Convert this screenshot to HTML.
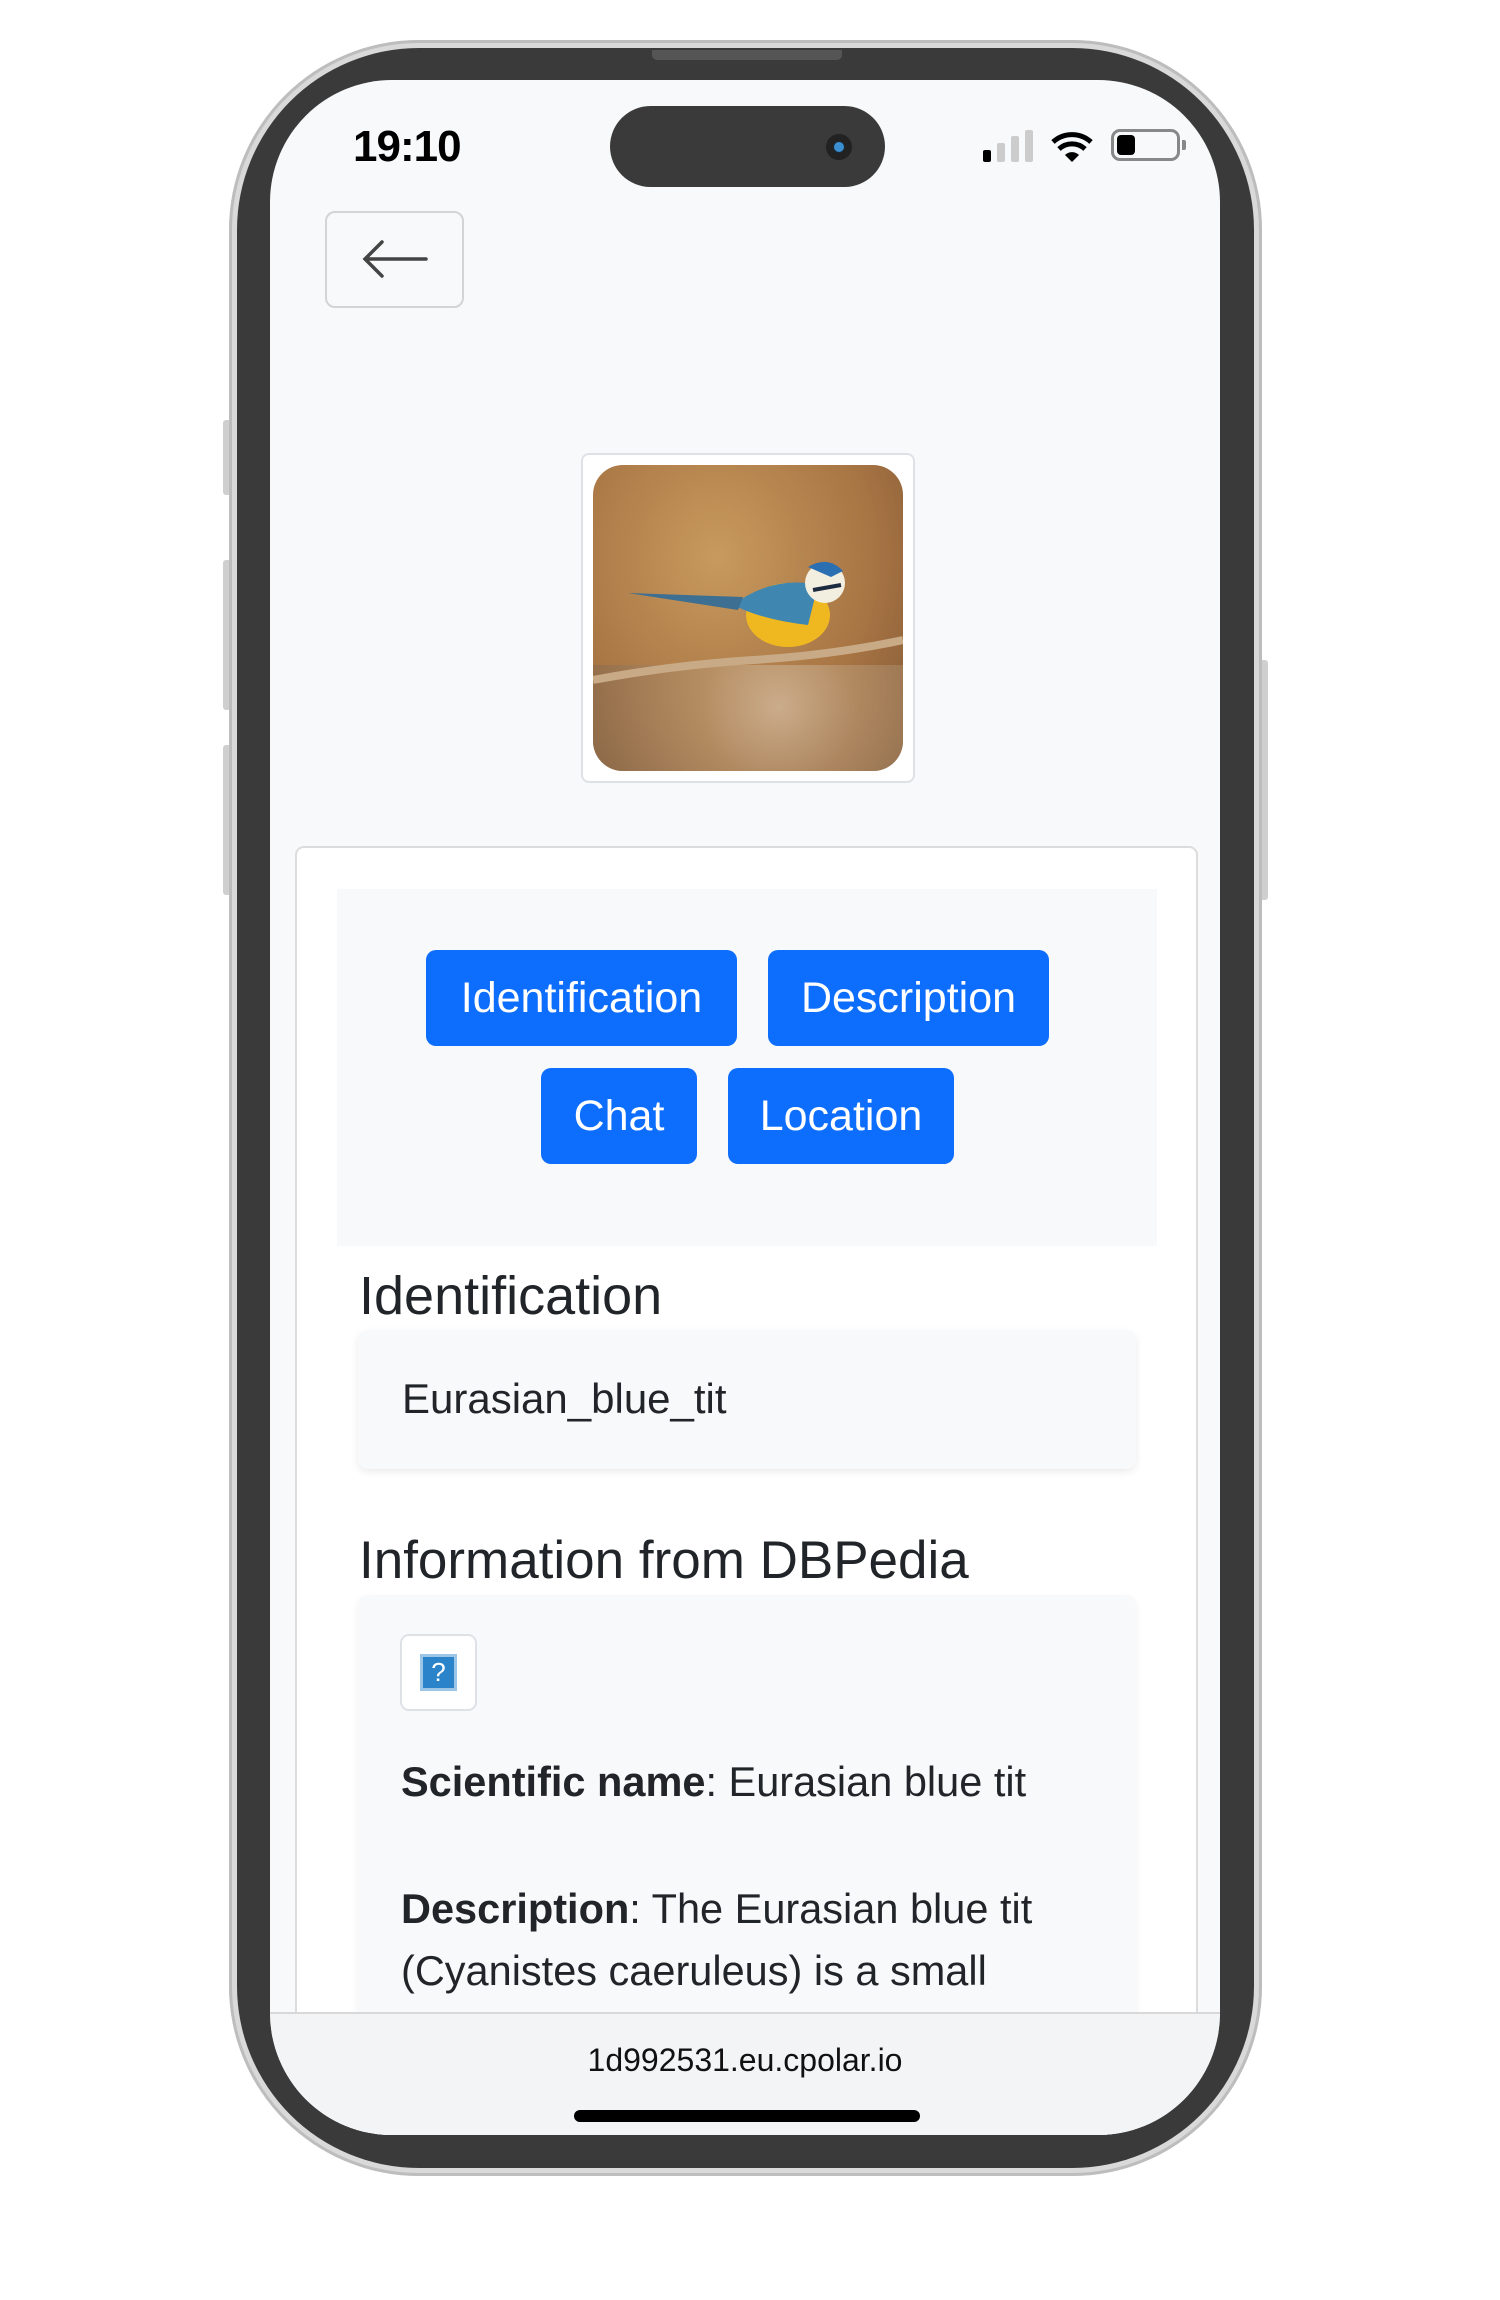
<!DOCTYPE html>
<html><head><meta charset="utf-8"><style>
*{box-sizing:border-box;margin:0;padding:0}
body{width:1500px;height:2300px;background:#fff;position:relative;overflow:hidden;font-family:"Liberation Sans",sans-serif;color:#212529}
.abs{position:absolute}
.frame{left:229px;top:40px;width:1033px;height:2136px;border-radius:190px;background:#d9d9d9;box-shadow:inset 0 0 0 3px #bdbdbd}
.bezel{left:237px;top:48px;width:1017px;height:2120px;border-radius:182px;background:#3a3a3a}
.screen{left:270px;top:80px;width:950px;height:2055px;border-radius:122px;background:#f8f9fa;overflow:hidden}
.btn{position:absolute;background:#0d6efd;color:#fff;border-radius:10px;font-size:43px;display:flex;align-items:center;justify-content:center}
</style></head><body>
<div class="abs" style="left:223px;top:420px;width:8px;height:75px;background:#cfcfcf;border-radius:3px"></div>
<div class="abs" style="left:223px;top:560px;width:8px;height:150px;background:#cfcfcf;border-radius:3px"></div>
<div class="abs" style="left:223px;top:745px;width:8px;height:150px;background:#cfcfcf;border-radius:3px"></div>
<div class="abs" style="left:1260px;top:660px;width:8px;height:240px;background:#cfcfcf;border-radius:3px"></div>
<div class="abs frame"></div>
<div class="abs bezel"></div>
<div class="abs" style="left:652px;top:50px;width:190px;height:10px;background:#555;border-radius:0 0 5px 5px"></div>
<div class="abs screen">
  <div class="abs" style="left:83px;top:42px;font-size:44px;font-weight:bold;color:#000;letter-spacing:-1px">19:10</div>
  <div class="abs" style="left:340px;top:26px;width:275px;height:81px;border-radius:41px;background:#3a3a3a"></div>
  <div class="abs" style="left:556px;top:54px;width:26px;height:26px;border-radius:50%;background:#1c2a36;box-shadow:inset 0 0 0 7px #222"></div>
  <div class="abs" style="left:564px;top:62px;width:10px;height:10px;border-radius:50%;background:#3a8fd0"></div>
  <div class="abs" style="left:713px;top:70px;width:8px;height:12px;background:#000;border-radius:2px"></div>
  <div class="abs" style="left:727px;top:63px;width:8px;height:19px;background:#ccc;border-radius:2px"></div>
  <div class="abs" style="left:741px;top:56px;width:8px;height:26px;background:#ccc;border-radius:2px"></div>
  <div class="abs" style="left:755px;top:50px;width:8px;height:32px;background:#ccc;border-radius:2px"></div>
  <svg class="abs" style="left:780px;top:51px" width="44" height="31" viewBox="0 0 44 31"><path d="M22 31 L15 24 A10 10 0 0 1 29 24 Z" fill="#000"/><path d="M9 18 A19 19 0 0 1 35 18" stroke="#000" stroke-width="5" fill="none"/><path d="M3 11 A28 28 0 0 1 41 11" stroke="#000" stroke-width="5" fill="none"/></svg>
  <div class="abs" style="left:841px;top:49px;width:69px;height:32px;border:3px solid #888;border-radius:9px"></div>
  <div class="abs" style="left:847px;top:55px;width:18px;height:20px;background:#000;border-radius:4px"></div>
  <div class="abs" style="left:912px;top:60px;width:4px;height:10px;background:#888;border-radius:0 2px 2px 0"></div>
  <div class="abs" style="left:55px;top:131px;width:139px;height:97px;border:2px solid #d4d4d4;border-radius:10px;background:#f8f9fa"></div>
  <svg class="abs" style="left:92px;top:158px" width="66" height="42" viewBox="0 0 66 42"><path d="M64 21 H4 M20 4 L3 21 L20 38" stroke="#444" stroke-width="3.5" fill="none" stroke-linecap="round"/></svg>
  <div class="abs" style="left:311px;top:373px;width:334px;height:330px;background:#fff;border:2px solid #dee2e6;border-radius:8px"></div>
  <div class="abs" style="left:323px;top:385px;width:310px;height:306px;border-radius:30px;overflow:hidden;background:radial-gradient(ellipse at 40% 30%,#c89a5e,#a77443 60%,#7d5636)">
    <div class="abs" style="left:0;top:200px;width:310px;height:106px;background:radial-gradient(circle at 60% 40%,#d8c2a8 0,#b8946d 40%,#8a6a4c 100%);opacity:.7"></div>
    <svg class="abs" style="left:0;top:0" width="310" height="306" viewBox="0 0 310 306"><path d="M0 215 Q80 200 160 195 T310 175" stroke="#c9aa86" stroke-width="8" fill="none"/><ellipse cx="195" cy="150" rx="42" ry="32" fill="#f0b820"/><path d="M140 140 Q180 110 225 120 L215 160 Q170 155 140 140Z" fill="#3f86b0"/><path d="M35 128 L150 132 L145 145Z" fill="#3c6f92"/><circle cx="232" cy="118" r="20" fill="#f3efe0"/><path d="M215 102 Q235 90 250 106 L238 112Z" fill="#2b6fb3"/><path d="M220 125 L248 120" stroke="#1c2a40" stroke-width="4"/></svg>
  </div>
  <div class="abs" style="left:25px;top:766px;width:903px;height:1400px;background:#fff;border:2px solid #dcdcdc;border-radius:9px"></div>
  <div class="abs" style="left:67px;top:809px;width:820px;height:357px;background:#f8f9fa"></div>
  <div class="btn" style="left:156px;top:870px;width:311px;height:96px">Identification</div>
  <div class="btn" style="left:498px;top:870px;width:281px;height:96px">Description</div>
  <div class="btn" style="left:271px;top:988px;width:156px;height:96px">Chat</div>
  <div class="btn" style="left:458px;top:988px;width:226px;height:96px">Location</div>
  <div class="abs" style="left:89px;top:1185px;font-size:54px">Identification</div>
  <div class="abs" style="left:88px;top:1250px;width:778px;height:139px;background:#f8f9fa;border-radius:10px;box-shadow:0 3px 8px rgba(0,0,0,.08)"></div>
  <div class="abs" style="left:132px;top:1295px;font-size:42px">Eurasian_blue_tit</div>
  <div class="abs" style="left:89px;top:1450px;font-size:53px">Information from DBPedia</div>
  <div class="abs" style="left:88px;top:1515px;width:778px;height:600px;background:#f8f9fa;border-radius:10px;box-shadow:0 3px 8px rgba(0,0,0,.06)"></div>
  <div class="abs" style="left:130px;top:1554px;width:77px;height:77px;background:#fff;border:2px solid #dee2e6;border-radius:9px"></div>
  <div class="abs" style="left:150px;top:1574px;width:37px;height:37px;background:#2b84c9;border:3px solid #9cc6e8;color:#fff;font-size:26px;text-align:center;line-height:30px">?</div>
  <div class="abs" style="left:131px;top:1678px;font-size:41.5px"><b>Scientific name</b>: Eurasian blue tit</div>
  <div class="abs" style="left:131px;top:1798px;font-size:41.5px;line-height:62px"><b>Description</b>: The Eurasian blue tit<br>(Cyanistes caeruleus) is a small</div>
  <div class="abs" style="left:0;top:1932px;width:950px;height:130px;background:#f3f4f6;border-top:2px solid #d8d8d8"></div>
  <div class="abs" style="left:0;top:1962px;width:950px;text-align:center;font-size:32px;color:#111">1d992531.eu.cpolar.io</div>
  <div class="abs" style="left:304px;top:2030px;width:346px;height:12px;background:#000;border-radius:6px"></div>
</div>
</body></html>
